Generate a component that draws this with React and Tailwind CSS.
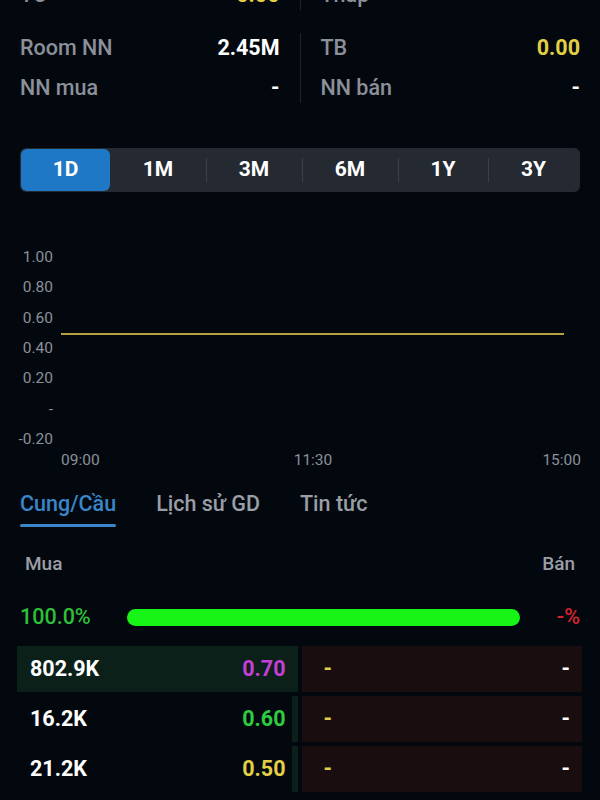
import React from 'react'

const ranges = ['1D', '1M', '3M', '6M', '1Y', '3Y']

const book = [
  { vol: '802.9K', price: '0.70', color: 'text-[#c53fd6]', fill: 100 },
  { vol: '16.2K', price: '0.60', color: 'text-[#2ecc40]', fill: 2 },
  { vol: '21.2K', price: '0.50', color: 'text-[#e3cf45]', fill: 2 },
]

const yTicks = ['1.00', '0.80', '0.60', '0.40', '0.20', '-', '-0.20']

const StatRow = ({ label, value, valueClass }) => (
  <div className="flex h-10 items-center justify-between">
    <span className="text-[21.5px] font-medium text-[#8b9099]">{label}</span>
    <span className={`text-[21.5px] font-bold ${valueClass}`}>{value}</span>
  </div>
)

const App = () => {
  return (
    <div className="h-[800px] w-[600px] overflow-hidden bg-[#03080f]" style={{ fontFamily: 'Roboto, "Liberation Sans", sans-serif' }}>
      {/* cut-off stats row */}
      <div className="-mt-[25px] grid grid-cols-[1fr_1px_1fr] px-5">
        <div className="pr-5"><StatRow label="TC" value="0.00" valueClass="text-[#e3cf45]" /></div>
        <div className="my-[5px] bg-[#1f242c]" />
        <div className="pl-5"><StatRow label="Thấp" value="" valueClass="text-white" /></div>
      </div>

      {/* stats */}
      <div className="mt-[13px] grid grid-cols-[1fr_1px_1fr] px-5">
        <div className="pr-5">
          <StatRow label="Room NN" value="2.45M" valueClass="text-white" />
          <StatRow label="NN mua" value="-" valueClass="text-white" />
        </div>
        <div className="my-[5px] bg-[#1f242c]" />
        <div className="pl-5">
          <StatRow label="TB" value="0.00" valueClass="text-[#e3cf45]" />
          <StatRow label="NN bán" value="-" valueClass="text-white" />
        </div>
      </div>

      {/* range tabs */}
      <div className="mx-5 mt-10 grid h-11 grid-cols-[89px_96px_96px_96px_90px_1fr] rounded-md bg-[#242932] p-px">
        {ranges.map((r, i) => (
          <div key={r} className="relative flex items-center justify-center">
            {i === 0 ? (
              <div className="flex h-full w-full items-center justify-center rounded-md bg-[#1f78c6] text-[21px] font-bold text-white">{r}</div>
            ) : (
              <span className="text-[21px] font-bold text-white">{r}</span>
            )}
            {i > 1 && <div className="absolute left-0 top-[9px] h-6 w-px bg-[#3a3f48]" />}
          </div>
        ))}
      </div>

      {/* chart */}
      <svg width="600" height="298" className="block" style={{ fontFamily: 'Roboto, "Liberation Sans", sans-serif' }}>
        {yTicks.map((t, i) => (
          <text key={i} x="53" y={65 + i * 30.33 + 5} textAnchor="end" fontSize="15.5" fill="#8b9099">{t}</text>
        ))}
        <line x1="61" y1="142" x2="564" y2="142" stroke="#b9a23e" strokeWidth="2" />
        <text x="61" y="273" fontSize="15.5" fill="#8b9099">09:00</text>
        <text x="313" y="273" fontSize="15.5" fill="#8b9099" textAnchor="middle">11:30</text>
        <text x="581" y="273" fontSize="15.5" fill="#8b9099" textAnchor="end">15:00</text>
      </svg>

      {/* section tabs */}
      <div className="flex gap-10 px-5">
        <div className="flex flex-col">
          <span className="text-[21.5px] font-medium leading-7 text-[#3a86c8]">Cung/Cầu</span>
          <div className="mt-[6px] h-[3px] rounded-full bg-[#3a86c8]" />
        </div>
        <span className="text-[21.5px] font-medium leading-7 text-[#9a9ea6]">Lịch sử GD</span>
        <span className="text-[21.5px] font-medium leading-7 text-[#9a9ea6]">Tin tức</span>
      </div>

      {/* buy/sell header */}
      <div className="mt-[27px] flex justify-between px-[25px] text-[19px] font-medium leading-5 text-[#9a9ea6]">
        <span>Mua</span>
        <span>Bán</span>
      </div>

      {/* ratio bar */}
      <div className="mt-[31px] flex items-center px-5">
        <span className="w-[107px] text-[21.5px] font-medium leading-6 text-[#2fbf3a]">100.0%</span>
        <div className="h-[17px] flex-1 rounded-full bg-[#16f516]" />
        <span className="w-[60px] text-right text-[21.5px] font-medium leading-6 text-[#d8252d]">-%</span>
      </div>

      {/* order book */}
      <div className="mt-[17px] flex flex-col gap-1 pl-[17px] pr-[18px]">
        {book.map((row) => (
          <div key={row.vol} className="grid h-[46px] grid-cols-2 gap-1">
            <div className="relative flex items-center justify-between pl-[13px] pr-[12px]">
              <div className="absolute inset-y-0 right-0 bg-[#0b2019]" style={{ width: `${row.fill}%` }} />
              <span className="relative text-[21.5px] font-bold text-white">{row.vol}</span>
              <span className={`relative text-[21.5px] font-bold ${row.color}`}>{row.price}</span>
            </div>
            <div className="flex items-center justify-between bg-[#1a0d10] pl-[22px] pr-[12px]">
              <span className="text-[21.5px] font-bold text-[#e3cf45]">-</span>
              <span className="text-[21.5px] font-bold text-white">-</span>
            </div>
          </div>
        ))}
      </div>
    </div>
  )
}

export default App
